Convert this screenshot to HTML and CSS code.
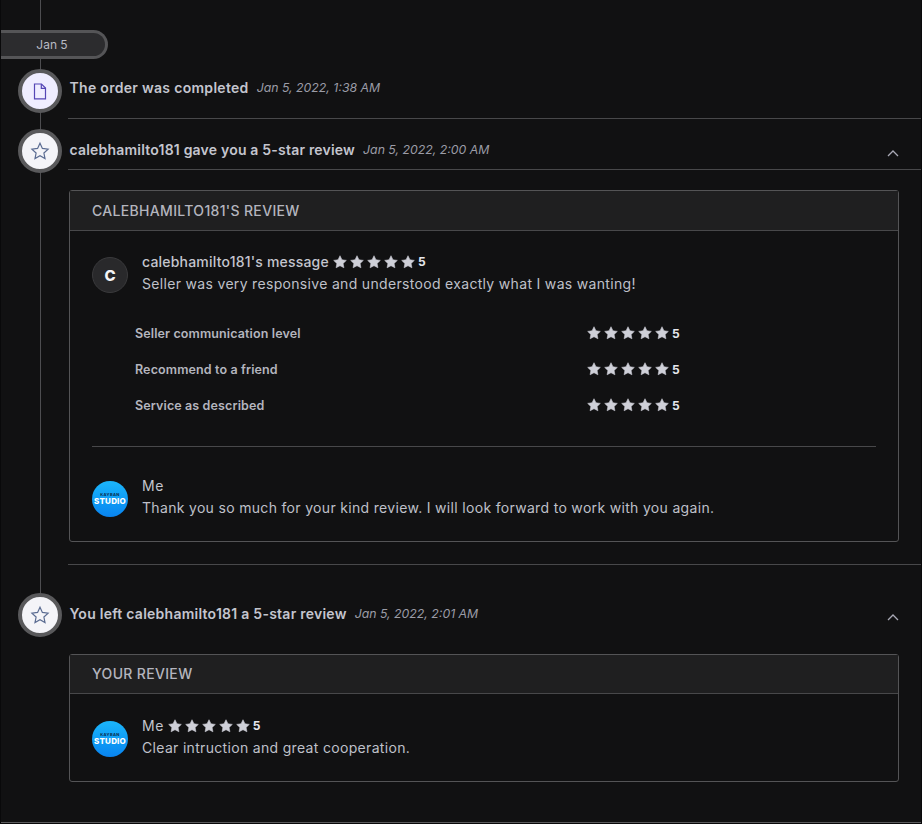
FILE: index.html
```html
<!DOCTYPE html>
<html lang="en">
<head>
<meta charset="utf-8">
<title>Order timeline</title>
<link rel="stylesheet" href="styles.css">
</head>
<body>
<svg class="defs" width="0" height="0" aria-hidden="true"><defs>
<symbol id="star" viewBox="0 0 16 16"><path d="M8 .8l2.250 4.600 5 .75-3.650 3.500.9 5L8 12.300l-4.500 2.350.9-5L.75 6.150l5-.75z"/></symbol>
<symbol id="star-o" viewBox="0 0 20 20"><path d="M10 2.200l2.400 5.200 5.700.7-4.200 3.900 1.100 5.600-5-2.800-5 2.800 1.100-5.600-4.200-3.900 5.700-.7z"/></symbol>
</defs></svg>
<main class="timeline">
  <div class="rail"></div>
  <div class="date-pill"><span>Jan 5</span></div>

  <section class="event event-first">
    <div class="badge badge-doc">
      <svg width="14" height="17" viewBox="0 0 14 17" fill="none" stroke="#5546b5" stroke-width="1.200"><path d="M1.500 1h7l4 4v10.800h-11z"/><path d="M8.300 1v4.300h4.300"/></svg>
    </div>
    <div class="event-body">
      <header class="event-head head-first">
        <strong>The order was completed</strong><em>Jan 5, 2022, 1:38 AM</em>
      </header>
    </div>
  </section>

  <section class="event event-second">
    <div class="badge">
      <svg class="star-o" width="20" height="20"><use href="#star-o"/></svg>
    </div>
    <div class="event-body body-divided">
      <header class="event-head head-second">
        <strong>calebhamilto181 gave you a 5-star review</strong><em>Jan 5, 2022, 2:00 AM</em>
        <svg class="chev" width="12" height="7" viewBox="0 0 12 7" fill="none" stroke="#a9a9b5" stroke-width="1.300"><path d="M1 6l5-5 5 5"/></svg>
      </header>
      <article class="card card-first">
        <h2 class="card-title">CALEBHAMILTO181'S REVIEW</h2>
        <div class="card-main">
          <div class="msg">
            <div class="avatar avatar-c">C</div>
            <div class="msg-text">
              <div class="msg-name">calebhamilto181's message
                <span class="stars">
                  <svg width="14" height="14"><use href="#star"/></svg><svg width="14" height="14"><use href="#star"/></svg><svg width="14" height="14"><use href="#star"/></svg><svg width="14" height="14"><use href="#star"/></svg><svg width="14" height="14"><use href="#star"/></svg><b>5</b>
                </span>
              </div>
              <p>Seller was very responsive and understood exactly what I was wanting!</p>
            </div>
          </div>
          <div class="ratings">
            <div class="rating"><span>Seller communication level</span><span class="stars"><svg width="14" height="14"><use href="#star"/></svg><svg width="14" height="14"><use href="#star"/></svg><svg width="14" height="14"><use href="#star"/></svg><svg width="14" height="14"><use href="#star"/></svg><svg width="14" height="14"><use href="#star"/></svg><b>5</b></span></div>
            <div class="rating"><span>Recommend to a friend</span><span class="stars"><svg width="14" height="14"><use href="#star"/></svg><svg width="14" height="14"><use href="#star"/></svg><svg width="14" height="14"><use href="#star"/></svg><svg width="14" height="14"><use href="#star"/></svg><svg width="14" height="14"><use href="#star"/></svg><b>5</b></span></div>
            <div class="rating"><span>Service as described</span><span class="stars"><svg width="14" height="14"><use href="#star"/></svg><svg width="14" height="14"><use href="#star"/></svg><svg width="14" height="14"><use href="#star"/></svg><svg width="14" height="14"><use href="#star"/></svg><svg width="14" height="14"><use href="#star"/></svg><b>5</b></span></div>
          </div>
          <div class="msg msg-reply">
            <div class="avatar avatar-logo"><i>KAYBAN</i><b>STUDIO</b></div>
            <div class="msg-text">
              <div class="msg-name msg-me">Me</div>
              <p>Thank you so much for your kind review. I will look forward to work with you again.</p>
            </div>
          </div>
        </div>
      </article>
    </div>
  </section>

  <section class="event event-third">
    <div class="badge">
      <svg class="star-o" width="20" height="20"><use href="#star-o"/></svg>
    </div>
    <div class="event-body">
      <header class="event-head head-third">
        <strong>You left calebhamilto181 a 5-star review</strong><em>Jan 5, 2022, 2:01 AM</em>
        <svg class="chev" width="12" height="7" viewBox="0 0 12 7" fill="none" stroke="#a9a9b5" stroke-width="1.300"><path d="M1 6l5-5 5 5"/></svg>
      </header>
      <article class="card card-last">
        <h2 class="card-title title-last">YOUR REVIEW</h2>
        <div class="msg msg-own">
          <div class="avatar avatar-logo"><i>KAYBAN</i><b>STUDIO</b></div>
          <div class="msg-text">
            <div class="msg-name msg-me">Me
              <span class="stars"><svg width="14" height="14"><use href="#star"/></svg><svg width="14" height="14"><use href="#star"/></svg><svg width="14" height="14"><use href="#star"/></svg><svg width="14" height="14"><use href="#star"/></svg><svg width="14" height="14"><use href="#star"/></svg><b>5</b></span>
            </div>
            <p>Clear intruction and great cooperation.</p>
          </div>
        </div>
      </article>
    </div>
  </section>
</main>
</body>
</html>
```
FILE: styles.css
```css
* { box-sizing: border-box; }
html, body { margin: 0; height: 100%; }
body {
  background: #09090a;
  color: #c4c5ce;
  font-family: Inter, "Liberation Sans", sans-serif;
  font-size: 14px;
  overflow: hidden;
}
.defs { position: absolute; }
.timeline {
  position: relative;
  width: 920px;
  height: 823px;
  margin-left: 1px;
  padding-top: 30px;
  background: #111112;
  border-bottom: 1px solid #5a5a5c;
}
.rail {
  position: absolute;
  left: 39px;
  top: 0;
  height: 600px;
  width: 1px;
  background: #4d4d50;
}
.date-pill {
  position: relative;
  width: 107px;
  height: 29px;
  padding-right: 2px;
  border: 3px solid #555557;
  border-left: 0;
  border-radius: 0 15px 15px 0;
  background: #2c2c2e;
  display: flex;
  align-items: center;
  justify-content: center;
  font-size: 12px;
  color: #b9bac3;
}
.date-pill span { margin-top: -1px; }
.event {
  position: relative;
  display: flex;
  align-items: flex-start;
  padding-left: 17px;
  gap: 6px;
}
.event-first { margin-top: 10px; }
.event-second { margin-top: 10px; }
.event-third { margin-top: 28px; }
.badge {
  flex: none;
  position: relative;
  width: 44px;
  height: 44px;
  border: 4px solid #59595b;
  border-radius: 50%;
  background: #f4f4f8;
  display: flex;
  align-items: center;
  justify-content: center;
}
.badge-doc { background: #efedff; }
.star-o { fill: none; stroke: #5b6c92; stroke-width: 1.2; }
.event-body { flex: 1; min-width: 0; }
.body-divided { padding-bottom: 22px; border-bottom: 1px solid #48484a; }
.event-head {
  display: flex;
  align-items: center;
  position: relative;
  padding-left: 1.500px;
}
.event-head strong { font-weight: 600; font-size: 14px; letter-spacing: .25px; color: #c4c5ce; }
.event-head em { font-style: italic; font-size: 12.300px; color: #9b9ca6; margin-left: 8px; }
.head-first { height: 50px; padding-bottom: 12px; border-bottom: 1px solid #48484a; }
.head-first strong { letter-spacing: .3px; }
.head-second { height: 41px; padding-bottom: 0; border-bottom: 1px solid #48484a; }
.head-second strong { letter-spacing: .2px; }
.head-third { height: 40px; }
.chev { position: absolute; right: 22px; top: 21px; }
.card {
  width: 830px;
  margin-left: 1px;
  border: 1px solid #545456;
  border-radius: 3px;
}
.card-first { margin-top: 20px; height: 352px; }
.card-last { margin-top: 21px; height: 128px; }
.card-title {
  margin: 0;
  height: 40px;
  display: flex;
  align-items: center;
  padding-left: 22px;
  background: #1f1f20;
  border-bottom: 1px solid #48484a;
  font-size: 14px;
  font-weight: 500;
  letter-spacing: .33px;
  color: #b4b5be;
}
.title-last { height: 39px; padding-bottom: 2px; }
.card-main { padding: 0 22px; }
.msg { display: flex; gap: 14px; }
.card-main > .msg:first-child { padding-top: 20px; }
.msg-reply { padding-top: 28px; border-top: 1px solid #48484a; }
.msg-own { padding: 21px 22px 0; }
.msg-own .msg-text { padding-top: 2px; }
.avatar {
  flex: none;
  width: 36px;
  height: 36px;
  margin-top: 6px;
  border-radius: 50%;
  display: flex;
  flex-direction: column;
  align-items: center;
  justify-content: center;
}
.avatar-c {
  background: #29292b;
  border: 1px solid #3a3a3c;
  color: #f4f4f6;
  font-weight: 800;
  font-size: 15px;
}
.avatar-logo {
  background: linear-gradient(180deg, #1cb6fb 0%, #0d9bf5 55%, #0a84f0 100%);
  color: #fff;
}
.avatar-logo i {
  font-style: normal;
  font-size: 4px;
  line-height: 4px;
  font-weight: 700;
  letter-spacing: .4px;
  color: #0b2a48;
}
.avatar-logo b {
  font-size: 8px;
  line-height: 8px;
  font-weight: 800;
  letter-spacing: .2px;
  margin-bottom: 1px;
}
.msg-text { min-width: 0; padding-top: 2px; }
.msg-text p { margin: 5px 0 0; line-height: 17px; font-size: 14px; letter-spacing: .32px; color: #bfc0c9; }
.msg-name {
  display: flex;
  align-items: center;
  gap: 4px;
  height: 17px;
  font-weight: 500;
  letter-spacing: .2px;
  color: #c4c5ce;
}
.msg-me { font-weight: 400; letter-spacing: .5px; }
.stars { display: inline-flex; align-items: center; fill: #cfd0d8; stroke: #cfd0d8; stroke-width: .6px; stroke-linejoin: round; gap: 3px; }
.stars svg { display: block; }
.stars b { font-size: 12px; font-weight: 700; letter-spacing: 0; color: #e6e6ec; }
.ratings { padding: 22px 0 23px 43px; }
.rating {
  display: grid;
  grid-template-columns: 452px auto;
  align-items: center;
  height: 36px;
  font-size: 12.500px;
  font-weight: 600;
  letter-spacing: .12px;
  color: #b4b5be;
}
```
